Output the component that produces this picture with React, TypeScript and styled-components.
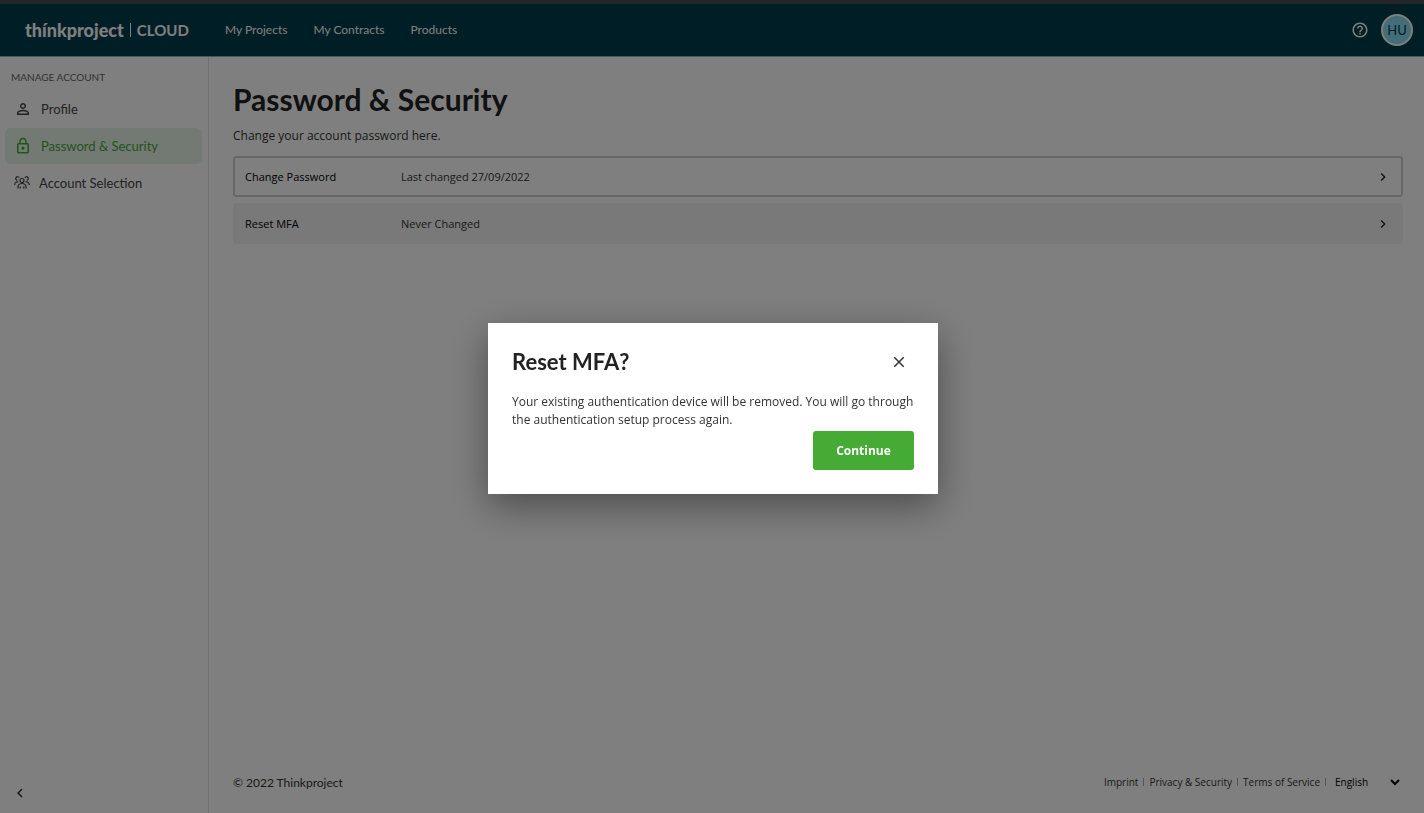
import React from "react";
import styled, { createGlobalStyle } from "styled-components";
import {
  MdChevronLeft,
  MdChevronRight,
  MdClose,
  MdHelpOutline,
  MdLockOutline,
  MdPersonOutline,
} from "react-icons/md";

const brandFont = `Lato, "Open Sans", sans-serif`;
const bodyFont = `"Open Sans", "Noto Sans", sans-serif`;

const GlobalStyle = createGlobalStyle`
  *, *::before, *::after { box-sizing: border-box; }
  body {
    margin: 0;
    background: #fff;
    color: #333;
    font-family: ${bodyFont};
    font-size: 12px;
  }
  a { color: inherit; text-decoration: none; }
  button, select { font-family: inherit; cursor: pointer; }
  h1, h2, p { margin: 0; }
`;

const Page = styled.div`
  display: flex;
  flex-direction: column;
  min-height: 100vh;
  border-top: 4px solid #4a4a50;
`;

const Header = styled.header`
  display: flex;
  align-items: center;
  height: 53px;
  padding: 0 11px 0 25px;
  background: #003c4b;
  border-bottom: 1px solid #8fb0b8;
  color: #fff;
  font-family: ${brandFont};
`;

const Logo = styled.a`
  display: flex;
  align-items: center;
  gap: 6px;
  width: 200px;
  font-size: 18px;
  line-height: 20px;
`;

const LogoName = styled.span`
  font-weight: 900;
`;

const LogoRule = styled.span`
  width: 1px;
  height: 14px;
  background: currentColor;
`;

const LogoSuite = styled.span`
  font-weight: 700;
  font-size: 15px;
`;

const Nav = styled.nav`
  display: flex;
  flex: 1;
  gap: 26px;
  font-size: 12px;
  line-height: 18px;
`;

const HeaderTools = styled.div`
  display: flex;
  align-items: center;
  gap: 12px;
`;

const IconButton = styled.button<{ $size: number }>`
  display: flex;
  align-items: center;
  justify-content: center;
  width: ${(p) => p.$size}px;
  height: ${(p) => p.$size}px;
  padding: 0;
  border: 0;
  background: none;
  color: inherit;
`;

const Avatar = styled.button`
  width: 32px;
  height: 32px;
  padding: 0;
  border: 2px solid #fff;
  border-radius: 50%;
  background: #86dcee;
  color: #003c4b;
  font-size: 13px;
  font-family: ${brandFont};
`;

const Body = styled.div`
  display: flex;
  flex: 1;
`;

const Sidebar = styled.aside`
  display: flex;
  flex-direction: column;
  width: 209px;
  padding: 12px 6px 10px 5px;
  border-right: 1px solid #e2e2e2;
  font-family: ${brandFont};
`;

const SidebarTitle = styled.h2`
  padding: 0 6px 6px;
  color: #666;
  font-size: 10px;
  font-weight: 400;
  line-height: 16px;
`;

const Menu = styled.div`
  display: flex;
  flex: 1;
  flex-direction: column;
  gap: 1px;
`;

const MenuItem = styled.a<{ $active?: boolean }>`
  display: flex;
  align-items: center;
  gap: 9px;
  height: 36px;
  padding: 0 9px;
  border-radius: 6px;
  background: ${(p) => (p.$active ? "#e6f2e6" : "transparent")};
  color: ${(p) => (p.$active ? "#45ab34" : "#444")};
  font-size: 13px;
`;

const Collapse = styled(IconButton)`
  margin-left: 5px;
`;

const Main = styled.main`
  display: flex;
  flex: 1;
  flex-direction: column;
  padding: 24px 21px 20px 24px;
`;

const Title = styled.h1`
  color: #222;
  font-family: ${brandFont};
  font-size: 30px;
  font-weight: 700;
  line-height: 36px;
`;

const Intro = styled.p`
  padding: 10px 0 11px;
  font-size: 12px;
  line-height: 18px;
`;

const Settings = styled.div`
  display: flex;
  flex: 1;
  flex-direction: column;
  gap: 6px;
`;

const SettingRow = styled.button<{ $filled?: boolean }>`
  display: grid;
  grid-template-columns: 156px 1fr auto;
  align-items: center;
  height: 41px;
  padding: 0 10px;
  border: 2px solid ${(p) => (p.$filled ? "#f2f2f2" : "#cfcfcf")};
  border-radius: 3px;
  background: ${(p) => (p.$filled ? "#f2f2f2" : "#fff")};
  color: #222;
  text-align: left;
`;

const SettingName = styled.span`
  color: #000;
  font-size: 11px;
`;

const SettingState = styled.span`
  color: #333;
  font-size: 11px;
`;

const Footer = styled.footer`
  display: flex;
  align-items: center;
  justify-content: space-between;
  height: 22px;
`;

const Copyright = styled.p`
  font-family: ${brandFont};
  font-size: 12px;
`;

const FooterLinks = styled.div`
  display: flex;
  align-items: center;
  font-size: 10px;
`;

const FooterLink = styled.a`
  padding-right: 5px;
  margin-right: 5px;
  border-right: 1px solid #aaa;
  line-height: 8px;
`;

const Language = styled.select`
  width: 72px;
  height: 20px;
  padding: 0;
  border: 0;
  background: transparent;
  color: #000;
  font-size: 10px;
`;

const Overlay = styled.div`
  position: fixed;
  inset: 0;
  display: flex;
  align-items: center;
  justify-content: center;
  padding: 4px 0 0 2px;
  background: rgba(0, 0, 0, 0.5);
`;

const Dialog = styled.section`
  display: flex;
  flex-direction: column;
  width: 450px;
  padding: 24px;
  background: #fff;
  box-shadow: 0 12px 36px rgba(0, 0, 0, 0.4);
`;

const DialogHead = styled.div`
  display: flex;
  align-items: center;
  justify-content: space-between;
  height: 30px;
`;

const DialogTitle = styled.h2`
  color: #222;
  font-family: ${brandFont};
  font-size: 22px;
  font-weight: 700;
  line-height: 30px;
`;

const DialogText = styled.p`
  padding: 16px 0 2px;
  font-size: 12px;
  line-height: 18px;
`;

const Continue = styled.button`
  align-self: flex-end;
  width: 101px;
  height: 39px;
  border: 0;
  border-radius: 3px;
  background: #45ab34;
  color: #fff;
  font-size: 12px;
  font-weight: 700;
`;

function PeopleIcon() {
  return (
    <svg width="16" height="16" viewBox="0 0 16 16" fill="none" stroke="currentColor" strokeWidth="1.2" aria-hidden="true">
      <circle cx="8" cy="5.500" r="2" />
      <path d="M4 13.500v-1.500a4 3.500 0 0 1 8 0V13.500M6.200 13.500v-2M9.800 13.500v-2" />
      <path d="M5.200 2.800A1.800 1.800 0 1 0 3.300 5.300M10.800 2.800A1.800 1.800 0 1 1 12.700 5.300" />
      <path d="M.8 10V9a3 2.500 0 0 1 3.700-2M15.200 10V9a3 2.500 0 0 0-3.700-2" />
    </svg>
  );
}

export default function App() {
  return (
    <>
      <GlobalStyle />
      <Page>
        <Header>
          <Logo href="#">
            <LogoName>thínkproject</LogoName>
            <LogoRule />
            <LogoSuite>CLOUD</LogoSuite>
          </Logo>
          <Nav>
            <a href="#projects">My Projects</a>
            <a href="#contracts">My Contracts</a>
            <a href="#products">Products</a>
          </Nav>
          <HeaderTools>
            <IconButton $size={18} aria-label="Help">
              <MdHelpOutline size={18} />
            </IconButton>
            <Avatar>HU</Avatar>
          </HeaderTools>
        </Header>
        <Body>
          <Sidebar>
            <SidebarTitle>MANAGE ACCOUNT</SidebarTitle>
            <Menu>
              <MenuItem href="#profile">
                <MdPersonOutline size={18} />
                Profile
              </MenuItem>
              <MenuItem href="#security" $active>
                <MdLockOutline size={18} />
                Password &amp; Security
              </MenuItem>
              <MenuItem href="#accounts">
                <PeopleIcon />
                Account Selection
              </MenuItem>
            </Menu>
            <Collapse $size={20} aria-label="Collapse sidebar">
              <MdChevronLeft size={18} />
            </Collapse>
          </Sidebar>
          <Main>
            <Title>Password &amp; Security</Title>
            <Intro>Change your account password here.</Intro>
            <Settings>
              <SettingRow>
                <SettingName>Change Password</SettingName>
                <SettingState>Last changed 27/09/2022</SettingState>
                <MdChevronRight size={16} />
              </SettingRow>
              <SettingRow $filled>
                <SettingName>Reset MFA</SettingName>
                <SettingState>Never Changed</SettingState>
                <MdChevronRight size={16} />
              </SettingRow>
            </Settings>
            <Footer>
              <Copyright>© 2022 Thinkproject</Copyright>
              <FooterLinks>
                <FooterLink href="#imprint">Imprint</FooterLink>
                <FooterLink href="#privacy">Privacy &amp; Security</FooterLink>
                <FooterLink href="#terms">Terms of Service</FooterLink>
                <Language aria-label="Language" defaultValue="en">
                  <option value="en">English</option>
                  <option value="de">Deutsch</option>
                </Language>
              </FooterLinks>
            </Footer>
          </Main>
        </Body>
      </Page>
      <Overlay>
        <Dialog role="dialog" aria-modal="true" aria-labelledby="dialog-title">
          <DialogHead>
            <DialogTitle id="dialog-title">Reset MFA?</DialogTitle>
            <IconButton $size={30} aria-label="Close">
              <MdClose size={18} />
            </IconButton>
          </DialogHead>
          <DialogText>
            Your existing authentication device will be removed. You will go through the authentication setup process
            again.
          </DialogText>
          <Continue>Continue</Continue>
        </Dialog>
      </Overlay>
    </>
  );
}
